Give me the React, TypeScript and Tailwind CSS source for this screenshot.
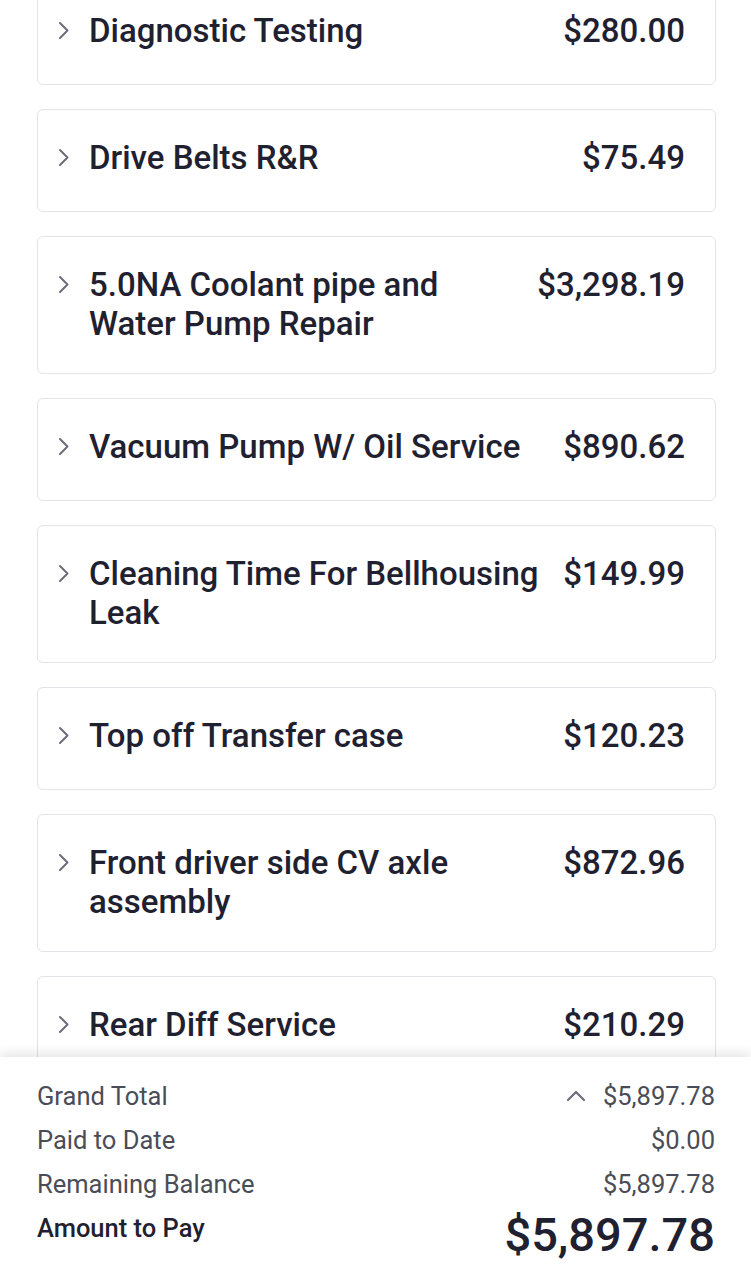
const items = [
  { name: 'Diagnostic Testing', price: '$280.00' },
  { name: 'Drive Belts R&R', price: '$75.49' },
  { name: '5.0NA Coolant pipe and Water Pump Repair', price: '$3,298.19' },
  { name: 'Vacuum Pump W/ Oil Service', price: '$890.62' },
  { name: 'Cleaning Time For Bellhousing Leak', price: '$149.99' },
  { name: 'Top off Transfer case', price: '$120.23' },
  { name: 'Front driver side CV axle assembly', price: '$872.96' },
  { name: 'Rear Diff Service', price: '$210.29' },
]

function ChevronRight() {
  return (
    <svg width="12" height="19" viewBox="0 0 12 19" fill="none" className="shrink-0">
      <path d="M2 2l7.5 7.5L2 17" stroke="#6b6e7a" strokeWidth="2" strokeLinecap="round" strokeLinejoin="round" />
    </svg>
  )
}

function ChevronUp() {
  return (
    <svg width="20" height="12" viewBox="0 0 20 12" fill="none">
      <path d="M2 10l8-8 8 8" stroke="#6b6e7a" strokeWidth="2.2" strokeLinecap="round" strokeLinejoin="round" />
    </svg>
  )
}

export default function App() {
  return (
    <div
      className="flex h-[1279px] flex-col overflow-hidden bg-white text-[#1f2130]"
      style={{ fontFamily: 'Roboto, "Liberation Sans", sans-serif' }}
    >
      {/* Lista de serviços */}
      <div className="flex-1 overflow-hidden pl-[37px] pr-[35px]">
        <div className="mt-[-18px] flex flex-col gap-[24px]">
          {items.map((item) => (
            <div
              key={item.name}
              className="flex min-h-[103px] items-start rounded-[6px] border border-[#e2e3e7] bg-white pt-[28px] pb-[30px] pl-[20px] pr-[30px]"
            >
              <div className="flex min-h-[43px] flex-1 items-start">
                <div className="flex h-[39px] w-[31px] items-center">
                  <ChevronRight />
                </div>
                <div className="flex-1 pr-[20px] text-[33px] font-medium leading-[39px]">{item.name}</div>
                <div className="text-[33px] font-medium leading-[39px]">{item.price}</div>
              </div>
            </div>
          ))}
        </div>
      </div>

      {/* Resumo fixo no rodapé */}
      <div className="relative z-10 h-[222px] shrink-0 bg-white pl-[37px] pr-[36px] pt-[17px] shadow-[0_-5px_10px_rgba(0,0,0,0.09)]">
        <div className="flex h-[44px] items-center justify-between text-[25.5px] text-[#4a4d57]">
          <span>Grand Total</span>
          <span className="flex items-center gap-[17px]">
            <ChevronUp />
            $5,897.78
          </span>
        </div>
        <div className="flex h-[44px] items-center justify-between text-[25.5px] text-[#4a4d57]">
          <span>Paid to Date</span>
          <span>$0.00</span>
        </div>
        <div className="flex h-[44px] items-center justify-between text-[25.5px] text-[#4a4d57]">
          <span>Remaining Balance</span>
          <span>$5,897.78</span>
        </div>
        <div className="flex items-start justify-between">
          <span className="text-[25.5px] font-medium leading-[44px] text-[#1f2130]">Amount to Pay</span>
          <span className="text-[47px] font-medium leading-[57px] text-[#1f2130]">$5,897.78</span>
        </div>
      </div>
    </div>
  )
}
